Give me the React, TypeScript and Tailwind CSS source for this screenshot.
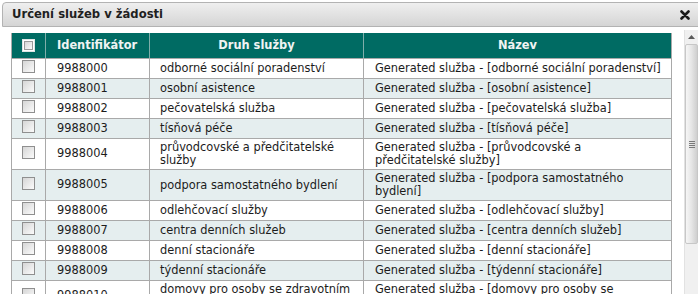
import React from "react";

type Row = { id: string; druh: string };

const rows: Row[] = [
  { id: "9988000", druh: "odborné sociální poradenství" },
  { id: "9988001", druh: "osobní asistence" },
  { id: "9988002", druh: "pečovatelská služba" },
  { id: "9988003", druh: "tísňová péče" },
  { id: "9988004", druh: "průvodcovské a předčitatelské služby" },
  { id: "9988005", druh: "podpora samostatného bydlení" },
  { id: "9988006", druh: "odlehčovací služby" },
  { id: "9988007", druh: "centra denních služeb" },
  { id: "9988008", druh: "denní stacionáře" },
  { id: "9988009", druh: "týdenní stacionáře" },
  { id: "9988010", druh: "domovy pro osoby se zdravotním postižením" },
];

function Checkbox({ header }: { header?: boolean }) {
  return (
    <div
      className={
        header
          ? "w-[13px] h-[13px] border border-[#dfe6e5] bg-white p-[1px]"
          : "w-[13px] h-[13px] border border-[#8f8f8f] bg-gradient-to-br from-[#d6d6d6] to-[#fbfbfb] mb-1"
      }
    >
      {header && <div className="w-full h-full border border-[#9a9a9a] bg-gradient-to-br from-[#d6d6d6] to-[#fbfbfb]" />}
    </div>
  );
}

function Scrollbar() {
  return (
    <div className="w-[14px] mt-[3px] bg-[#f0f0f0] border-l border-[#e2e2e2] flex flex-col">
      <div className="h-[14px] flex items-center justify-center">
        <svg width="7" height="4" viewBox="0 0 7 4">
          <path d="M0 4 L3.5 0 L7 4 Z" fill="#5a5a5a" />
        </svg>
      </div>
      <div className="h-[200px] bg-gradient-to-r from-[#f6f6f6] via-[#e6e6e6] to-[#cfcfcf] border border-[#c7c7c7] rounded-[2px] flex items-center justify-center">
        <div className="flex flex-col gap-[1px]">
          <div className="w-[6px] h-[1px] bg-[#7a7a7a]" />
          <div className="w-[6px] h-[1px] bg-[#7a7a7a]" />
          <div className="w-[6px] h-[1px] bg-[#7a7a7a]" />
          <div className="w-[6px] h-[1px] bg-[#7a7a7a]" />
        </div>
      </div>
    </div>
  );
}

export default function App() {
  return (
    <div
      className="w-[698px] h-[294px] overflow-hidden bg-white text-[11.4px] text-[#1c1c1c]"
      style={{ fontFamily: '"DejaVu Sans", Verdana, sans-serif' }}
    >
      {/* Title bar */}
      <div className="ml-[2px] mt-[2px] h-[25px] -mr-[4px] rounded-tl-[4px] border border-[#b3b3b3] bg-gradient-to-b from-[#efefef] to-[#d5d5d5] flex items-center justify-between pl-[9px] pr-[11px]">
        <span className="font-bold text-[11.6px] text-[#1f1f1f]">Určení služeb v žádosti</span>
        <svg width="10" height="10" viewBox="0 0 10 10">
          <path d="M1.5 1.5 L8.5 8.5 M8.5 1.5 L1.5 8.5" stroke="#1a1a1a" strokeWidth="2.6" strokeLinecap="round" />
        </svg>
      </div>

      <div className="flex">
        <div className="pl-[11px] pt-[6px] w-[684px]">
          <div className="w-[661px] border-l border-[#a9a9a9]">
            {/* Header */}
            <div className="grid grid-cols-[34px_104px_214px_308px] h-[26px] bg-[#006b63] text-[#f0f4f3] font-bold border-b border-[#a9a9a9]">
              <div className="flex items-center justify-center border-r border-[#80aeaa]">
                <Checkbox header />
              </div>
              <div className="flex items-center pl-[11px] border-r border-[#80aeaa]">Identifikátor</div>
              <div className="flex items-center justify-center border-r border-[#80aeaa]">Druh služby</div>
              <div className="flex items-center justify-center border-r border-[#a9a9a9]">Název</div>
            </div>

            {/* Body */}
            {rows.map((r, i) => {
              const tall = i === 4 || i === 5 || i === 10;
              return (
                <div
                  key={r.id}
                  className={`grid grid-cols-[34px_104px_214px_308px] border-b border-[#a9a9a9] ${
                    tall ? "h-[31px]" : "h-[20px]"
                  } ${i % 2 === 1 ? "bg-[#e5eeef]" : "bg-white"}`}
                >
                  <div className="flex items-center justify-center border-r border-[#a9a9a9]">
                    <Checkbox />
                  </div>
                  <div className="flex items-center pl-[11px] border-r border-[#a9a9a9]">{r.id}</div>
                  <div className="flex items-center pl-[10px] pr-[6px] leading-[13px] border-r border-[#a9a9a9]">
                    {r.druh}
                  </div>
                  <div className="flex items-center pl-[11px] pr-[7px] leading-[13px] border-r border-[#a9a9a9]">
                    Generated služba - [{r.druh}]
                  </div>
                </div>
              );
            })}
          </div>
        </div>
        <Scrollbar />
      </div>
    </div>
  );
}
